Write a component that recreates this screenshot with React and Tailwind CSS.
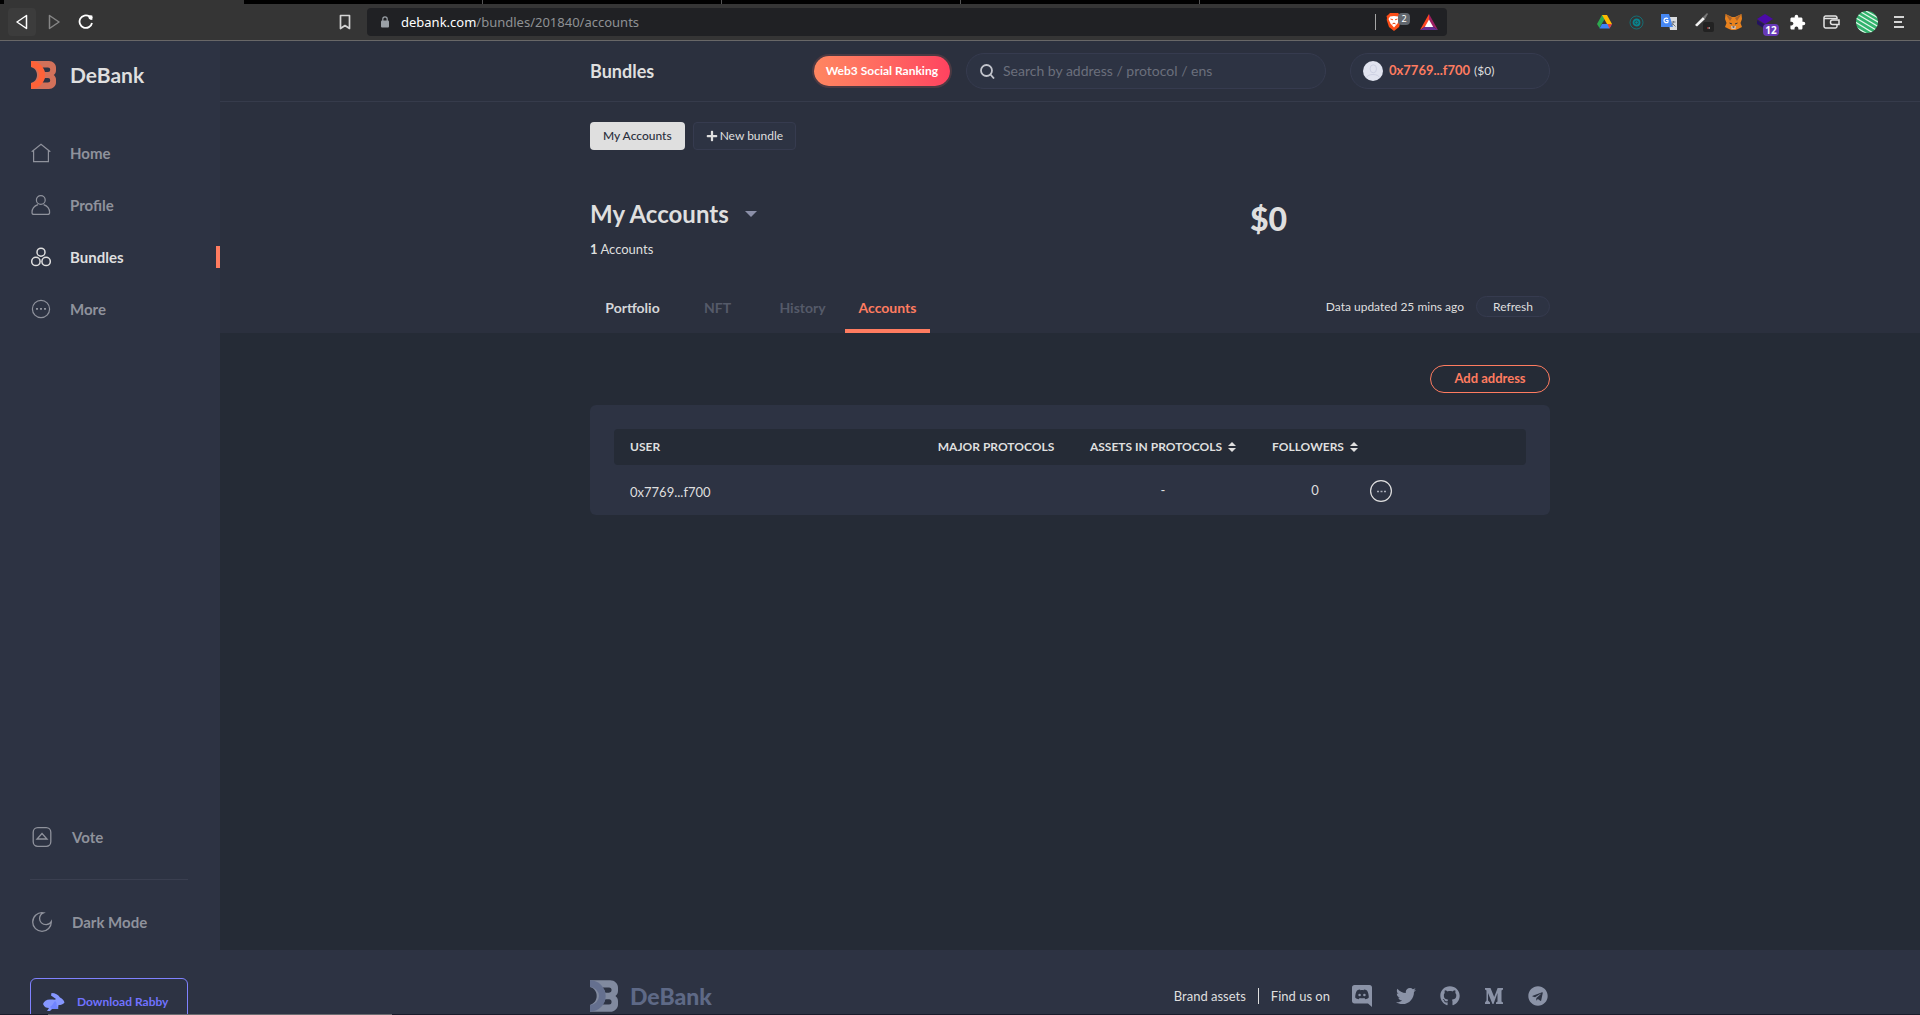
import React from "react";
import clsx from "clsx";
import { FaGithub, FaPlus, FaTelegram, FaTwitter } from "react-icons/fa";
import { MdExtension } from "react-icons/md";

const navItems = [
  { name: "Home", icon: HomeIcon },
  { name: "Profile", icon: ProfileIcon },
  { name: "Bundles", icon: BundlesIcon, active: true },
  { name: "More", icon: MoreIcon },
];

const tabs = [
  { name: "Portfolio", color: "text-[#d5d6d9]" },
  { name: "NFT", color: "text-[#555a69]" },
  { name: "History", color: "text-[#555a69]" },
  { name: "Accounts", color: "text-[#ff7c60]", active: true },
];

function HomeIcon() {
  return (
    <svg className="size-5" viewBox="0 0 20 20" fill="none" stroke="currentColor" strokeWidth="1.2">
      <path d="M0.7 8.8 10 1.2l9.3 7.6M2.6 7.6v11h14.8v-11" />
    </svg>
  );
}

function ProfileIcon() {
  return (
    <svg className="size-5" viewBox="0 0 20 20" fill="none" stroke="currentColor" strokeWidth="1.2">
      <circle cx="9.8" cy="5" r="4.4" />
      <path d="M7 9.6C3.500 10.800 1 14 1 17.400c0 1.300.8 2 2 2h13.600c1.200 0 2-.7 2-2 0-3.400-2.500-6.600-6-7.800" />
    </svg>
  );
}

function BundlesIcon() {
  return (
    <svg className="size-5" viewBox="0 0 20 20" fill="none" stroke="currentColor" strokeWidth="1.5">
      <circle cx="10" cy="5.200" r="4" />
      <circle cx="4.900" cy="14.400" r="4.200" />
      <circle cx="15.100" cy="14.400" r="4.200" />
    </svg>
  );
}

function MoreIcon() {
  return (
    <svg className="size-5" viewBox="0 0 20 20" fill="none" stroke="currentColor" strokeWidth="1.2">
      <circle cx="10" cy="10" r="8.600" />
      <path d="M5 9.800h2M9 9.800h2M13 9.800h2" strokeWidth="1.800" />
    </svg>
  );
}

function VoteIcon() {
  return (
    <svg className="size-5" viewBox="0 0 20 20" fill="none" stroke="currentColor" strokeWidth="1.300">
      <rect x="1.200" y="0.700" width="17.600" height="18.600" rx="4.500" />
      <path d="M10 6.500 15 12H5z" />
    </svg>
  );
}

function MoonIcon() {
  return (
    <svg className="size-5" viewBox="0 0 20 20" fill="none" stroke="currentColor" strokeWidth="1.300">
      <path d="M11.500.8C5.500-.2.700 4.600.700 10c0 5.300 4.200 9.300 9.300 9.300s9.600-4.200 9.300-9.800c-1.300 2.300-3 3.200-5.100 3.200-4 0-6.600-2.800-6.600-6.200 0-2.600 1.500-4.700 3.900-5.700z" />
    </svg>
  );
}

function RabbitIcon() {
  return (
    <svg className="h-[18px] w-[22px]" viewBox="0 0 22 18">
      <path d="M0 11c1-3 4-5 8-4.500 3 0 4 .5 5-.5L8 2.500 8.500 0c4 0 6.500 1.500 8.500 4.500 2.500 1 4 3 4.500 5C20 11.500 18 12 15.500 12L15 16H9l-2 2H4l2-3c-3 0-4.500-1-6-4z" fill="#8697ff" />
      <path d="M7 14c2-1 3-3 5-6 1.500 1 2 3 1.500 4.500L15.500 16H9z" fill="#7084ff" />
    </svg>
  );
}

function DebankLogo({ className, front, back }) {
  return (
    <svg className={className} viewBox="0 0 25 28">
      <path
        fill={back}
        fillRule="evenodd"
        d="M0 0h18c4 0 7 3 7 6.500v3c0 2-1 3.500-2.300 4.500 1.300 1 2.300 2.500 2.300 4.500v3c0 3.500-3 6.500-7 6.500H0v-6c8-2 8-14 0-16zM11 6.500c1.500 1.500 2.300 3 2.700 4.500h3.300a2.250 2.250 0 0 0 0-4.500zM13.700 17c-.4 1.500-1.200 3-2.700 4.500h6a2.250 2.250 0 0 0 0-4.500z"
      />
      <path fill={front} d="M0 0a14 14 0 0 1 0 28v-6a8 8 0 0 0 0-16z" />
    </svg>
  );
}

function DiscordIcon() {
  return (
    <svg className="h-[22px] w-5" viewBox="0 0 20 22" fill="currentColor">
      <path
        fillRule="evenodd"
        d="M2.500 0h15C19 0 20 1 20 2.500V22l-4-3.500H2.500C1 18.500 0 17.500 0 16V2.500C0 1 1 0 2.500 0zM5 5.500C3.800 7.500 3.200 10 3.200 12.500c1 1.300 2.200 1.700 3.600 1.700l.8-1.200c1.500.4 3.300.4 4.800 0l.8 1.200c1.400 0 2.600-.4 3.600-1.700 0-2.500-.6-5-1.800-7-1-.7-2-1-3-1l-.4.7c-1-.2-2.200-.2-3.200 0L8 4.500c-1 0-2 .3-3 1z"
      />
      <circle cx="7.600" cy="10" r="1.300" />
      <circle cx="12.400" cy="10" r="1.300" />
    </svg>
  );
}

function SortIcon() {
  return (
    <svg className="h-2.5 w-2" viewBox="0 0 8 10" fill="currentColor">
      <path d="M4 0l4 4H0zM4 10l4-4H0z" />
    </svg>
  );
}

function BrowserBar() {
  return (
    <div className="text-[#e0e0e0]">
      <div className="flex h-1 bg-black pl-1">
        <div className="w-60 bg-[#353535]" />
        <div className="w-[239px] border-r border-[#555]" />
        <div className="w-[239px] border-r border-[#555]" />
        <div className="w-[239px] border-r border-[#555]" />
        <div className="w-[239px] border-r border-[#555]" />
      </div>
      <div className="flex h-[37px] items-center border-b border-[#686767] bg-[#353535]">
        <div className="flex w-[367px] items-center pl-2">
          <button aria-label="Back" className="flex size-7 items-center justify-center rounded bg-[#3c3c3c]">
            <svg className="h-4 w-3" viewBox="0 0 12 16" fill="none" stroke="#fff" strokeWidth="1.500" strokeLinejoin="round">
              <path d="M10.500 1.500v13L1 8z" />
            </svg>
          </button>
          <button aria-label="Forward" className="ml-1 flex size-7 items-center justify-center">
            <svg className="h-4 w-3" viewBox="0 0 12 16" fill="none" stroke="#868686" strokeWidth="1.500" strokeLinejoin="round">
              <path d="M1.500 1.500v13L11 8z" />
            </svg>
          </button>
          <button aria-label="Reload" className="ml-1 flex size-7 items-center justify-center">
            <svg className="size-4" viewBox="0 0 16 16" fill="none" stroke="#fff" strokeWidth="1.800">
              <path d="M11.500 2.500A6.300 6.300 0 1 0 14 9" />
              <path d="M9.800 1.500h4.500v4.500l-2-.500z" fill="#fff" stroke="none" />
              <circle cx="12.500" cy="3.500" r="2" fill="#fff" stroke="none" />
            </svg>
          </button>
          <button aria-label="Bookmark" className="mr-4 ml-auto">
            <svg className="h-4 w-3" viewBox="0 0 12 16" fill="none" stroke="#d5d5d5" strokeWidth="1.700">
              <path d="M1.500 1.500h9v13L6 11.500l-4.500 3z" strokeLinejoin="round" />
            </svg>
          </button>
        </div>
        <div className="flex h-7 flex-1 items-center rounded bg-[#202124] pr-2 pl-3.5">
          <svg className="h-3 w-2" viewBox="0 0 8 12">
            <path d="M1.800 5V3a2.200 2.200 0 0 1 4.400 0v2" fill="none" stroke="#9aa0a6" strokeWidth="1.200" />
            <rect y="4.500" width="8" height="7" rx="1" fill="#9aa0a6" />
          </svg>
          <div className="ml-3 flex-1 pt-px font-['Noto_Sans',sans-serif] text-[13px] text-[#8f9194]">
            <span className="text-white">debank.com</span>/bundles/201840/accounts
          </div>
          <div className="h-4 w-px bg-[#a5a5a5]" />
          <div className="relative ml-2.5">
            <svg className="h-[18px] w-4" viewBox="0 0 16 18">
              <path d="M4 0h8l2 2 1.500 1-.5 2 .3 2L13 14l-5 4-5-4L.700 7 1 5 .500 3 2 2z" fill="#fb4d17" />
              <path d="M4 3.500 8 3l4 .5 1.500 2.500-2 4.500L8 14.500 4.500 10.500l-2-4.500z" fill="#fff" />
              <path d="M4.500 6l2.500.800M11.500 6 9 6.800M6.500 11l1.500-1 1.500 1" stroke="#fb4d17" />
            </svg>
            <span className="absolute top-0 left-3 flex h-3 w-3 items-center justify-center rounded bg-[#61676e] font-['Noto_Sans',sans-serif] text-[9px] text-white">
              2
            </span>
          </div>
          <svg className="mr-px ml-[18px] h-4 w-[18px]" viewBox="0 0 18 16">
            <path d="M9 0 0 16l9-6z" fill="#ff4724" />
            <path d="M9 0l9 16-9-6z" fill="#9e1f63" />
            <path d="M0 16h18l-9-6z" fill="#662d91" />
            <path d="M9 5.500 4.800 13h8.400z" fill="#fff" />
          </svg>
        </div>
        <div className="flex w-[473px] items-center justify-end pr-4">
          <svg className="mr-[17px] h-3.5 w-[15px]" viewBox="0 0 15 14">
            <path d="M5 0h5L5 8.500 2.500 13 0 9z" fill="#2da94f" />
            <path d="M5 0h5l5 9h-5z" fill="#ffba00" />
            <path d="M5 9h10l-2.500 4.500h-10z" fill="#3d83f6" />
            <path d="M10.500 9H15l-2.500 4.500z" fill="#ea4335" />
          </svg>
          <svg className="mr-[17px] size-[15px]" viewBox="0 0 15 15" fill="none" stroke="#08858f">
            <circle cx="7.500" cy="7.500" r="6.500" strokeOpacity=".7" />
            <circle cx="7.500" cy="7.500" r="3" strokeWidth="1.800" />
            <circle cx="7.500" cy="7.500" r="1" fill="#08858f" />
          </svg>
          <svg className="mr-4 h-4 w-[17px]" viewBox="0 0 17 16">
            <path d="M7 3h9v13H9z" fill="#d9dbde" />
            <path d="M0 0h8l4 13H0z" fill="#4688f4" />
            <path d="M10.500 8h4M12.500 7v1l-2 4M11.500 9.500l3 3" stroke="#70777f" fill="none" />
            <path d="M7 4.800A2.300 2.300 0 1 0 7 8V6.500H5" stroke="#fff" strokeWidth="1.200" fill="none" />
          </svg>
          <svg className="mr-[11px] h-5 w-5" viewBox="0 0 20 20">
            <path d="M1 13 9 5l2 2-8 7.500z" fill="#f2f2f2" />
            <path d="m9 5 4-4 1 1-3 5z" fill="#777" />
            <rect x="9" y="10" width="11" height="10" rx="2" fill="#222" />
            <path d="M13 16h1.500" stroke="#e33" />
            <path d="M14.500 16H16" stroke="#eee" />
          </svg>
          <svg className="mr-[15px] h-4 w-[17px]" viewBox="0 0 17 16">
            <path d="M.500 0 7 3h3l6.500-3L17 5l-1.500 4L17 13l-4 2-2.500 1h-4L4 15l-4-2 1.500-4L0 5z" fill="#e8821e" />
            <path d="M.500 0 7 4 5 7zM16.500 0 10 4l2 3z" fill="#a8632b" />
            <path d="M6 12h5l-.5 3h-4z" fill="#d5bfb2" />
            <path d="M4.500 9 7 10M12.500 9 10 10" stroke="#233447" />
            <path d="M7.500 12.500h2l-.3 1h-1.400z" fill="#161616" />
          </svg>
          <div className="relative mr-4">
            <svg className="h-4 w-4" viewBox="0 0 16 16">
              <path d="M8 0l8 5-8 5-8-5z" fill="#4b0aa8" />
              <path d="M0 6v4l8 5V11z" fill="#23125f" />
            </svg>
            <span className="absolute top-2.5 left-1.5 flex h-3 w-4 items-center justify-center rounded-sm bg-[#673ab7] font-['Open_Sans',sans-serif] text-[10px] font-bold text-white">
              12
            </span>
          </div>
          <MdExtension className="mr-[17px] size-[17px] text-white" />
          <svg className="mr-4 h-3.5 w-[17px]" viewBox="0 0 17 14" fill="none" stroke="#e3e3e3" strokeWidth="1.500">
            <path d="M14 4V2.500A1.700 1.700 0 0 0 12.500 1h-10A1.700 1.700 0 0 0 1 2.500v9A1.700 1.700 0 0 0 2.500 13h10a1.700 1.700 0 0 0 1.500-1.500V10M1 3.500h13" />
            <path d="M9.500 5H16v4.500H9.500a2 2 0 0 1-2-2V7a2 2 0 0 1 2-2z" fill="#353535" />
          </svg>
          <svg className="mr-4 size-[22px]" viewBox="0 0 22 22">
            <clipPath id="globe">
              <circle cx="11" cy="11" r="11" />
            </clipPath>
            <g clipPath="url(#globe)">
              <path d="M0 0h22v22H0z" fill="#32b36d" />
              <path d="M10 0l14 8M5 1l18 10.500M1 3l21 12.500M0 7l21 12.500M-1 11l19 11.500M-1 16l14 8" stroke="#e2f6ea" strokeWidth="1.300" />
            </g>
          </svg>
          <button aria-label="Menu" className="flex w-2.5 flex-col gap-[3px]">
            <span className="h-0.5 w-2.5 bg-[#d5d5d5]" />
            <span className="h-0.5 w-2 bg-[#d5d5d5]" />
            <span className="h-0.5 w-2.5 bg-[#d5d5d5]" />
          </button>
        </div>
      </div>
    </div>
  );
}

function Sidebar() {
  return (
    <aside className="flex w-[220px] shrink-0 flex-col bg-[#2d3343] pt-5 text-[15px] font-bold text-[#8f929c]">
      <a href="#" className="flex h-7 items-center gap-3.5 pl-[31px] text-[21px] leading-6 text-[#dfdfdf]">
        <DebankLogo className="h-7 w-[25px]" front="#ff6238" back="#d2715a" />
        DeBank
      </a>
      <nav className="mt-[38px] flex flex-col">
        {navItems.map(({ name, icon: Icon, active }) => (
          <a
            key={name}
            href="#"
            className={clsx("flex h-[52px] items-center justify-between pl-[31px]", active && "text-[#dfdfdf]")}
          >
            <span className="flex items-center gap-[19px]">
              <Icon />
              {name}
            </span>
            {active && <span className="h-[22px] w-1 bg-[#ff7c60]" />}
          </a>
        ))}
      </nav>
      <div className="mt-auto px-[30px] pr-8">
        <a href="#" className="flex items-center gap-5 pb-[30px] pl-0.5 leading-6">
          <VoteIcon />
          Vote
        </a>
        <button className="flex w-full items-center gap-5 border-t border-[#3a3f50] pt-[30px] pb-11 pl-0.5 leading-6">
          <MoonIcon />
          Dark Mode
        </button>
        <div className="h-9 overflow-hidden">
          <a
            href="#"
            className="flex h-12 items-center gap-3 rounded-md border border-[#8082ff] pl-3 text-xs text-[#7172ff]"
          >
            <RabbitIcon />
            Download Rabby
          </a>
        </div>
      </div>
    </aside>
  );
}

function Header() {
  return (
    <header className="border-b border-[#363b4b]">
      <div className="mx-auto flex h-[60px] max-w-[960px] items-center">
        <h1 className="text-lg font-bold">Bundles</h1>
        <button className="ml-auto h-[30px] rounded-full bg-linear-to-r from-[#ff8660] to-[#ff4260] px-3 text-xs font-bold text-white ring-2 ring-[#4c3a43]">
          Web3 Social Ranking
        </button>
        <label className="ml-4 flex h-9 w-[360px] items-center gap-2 rounded-full border border-[#363b4f] bg-[#2d3343] px-[13px]">
          <svg className="size-[15px]" viewBox="0 0 15 15" fill="none" stroke="#c2c4cc" strokeWidth="1.800">
            <circle cx="6.500" cy="6.500" r="5.500" />
            <path d="m10.500 10.500 3.500 4" />
          </svg>
          <input
            aria-label="Search"
            placeholder="Search by address / protocol / ens"
            className="flex-1 text-sm outline-none placeholder:text-[#6b6f7c]"
          />
        </label>
        <a
          href="#"
          className="ml-6 flex h-9 w-[200px] items-center rounded-full border border-[#363b4f] bg-[#2d3343] pl-3"
        >
          <svg className="size-5" viewBox="0 0 20 20">
            <circle cx="10" cy="10" r="10" fill="#e1e4f0" />
            <g fill="none" stroke="#cdd1e3">
              <ellipse cx="10.300" cy="7.800" rx="3.200" ry="4" />
              <path d="M3.500 16.500c1-2 3-3 6.500-3s5.500 1 6.500 3" />
            </g>
          </svg>
          <span className="ml-1.5 text-[13px] font-bold text-[#ff7c60]">0x7769...f700</span>
          <span className="ml-1 text-xs">($0)</span>
        </a>
      </div>
    </header>
  );
}

function Hero() {
  return (
    <section className="mx-auto w-full max-w-[960px] pt-5">
      <div className="flex gap-2">
        <button className="h-7 rounded bg-[#dfdfdf] px-[13px] text-xs font-medium text-[#2b303e]">My Accounts</button>
        <button className="flex h-7 items-center gap-0.5 rounded border border-[#363b4f] bg-[#2d3343] px-3 text-xs">
          <FaPlus className="size-3" />
          New bundle
        </button>
      </div>
      <div className="mt-12 grid grid-cols-[660px_1fr]">
        <div>
          <button className="flex items-center gap-4 text-2xl leading-8 font-bold">
            My Accounts
            <svg className="h-1.5 w-3" viewBox="0 0 12 6">
              <path d="M0 0h12L6 6z" fill="#8b8fa8" />
            </svg>
          </button>
          <p className="mt-[9px] text-[13px] leading-5">
            <b>1</b> Accounts
          </p>
        </div>
        <div className="text-[32px] leading-[42px] font-black">$0</div>
      </div>
      <div className="mt-[26px] flex h-12 items-start">
        {tabs.map((tab) => (
          <button
            key={tab.name}
            className={clsx(
              "h-12 w-[85px] border-b-4 pt-0.5 text-sm font-bold",
              tab.color,
              tab.active ? "border-[#ff7c60]" : "border-transparent"
            )}
          >
            {tab.name}
          </button>
        ))}
        <div className="mt-[11px] ml-auto flex items-center gap-3 text-xs">
          Data updated 25 mins ago
          <button className="h-[21px] rounded-full border border-[#363b4f] bg-[#2d3343] px-4">Refresh</button>
        </div>
      </div>
    </section>
  );
}

function AccountsTable() {
  return (
    <div className="mt-3 rounded-md bg-[#2d3343] px-6 pt-6">
      <table className="w-full table-fixed">
        <thead className="bg-[#252b36] text-xs">
          <tr className="h-9">
            <th className="w-[320px] rounded-l-sm pl-4 text-left">USER</th>
            <th className="w-[124px]">MAJOR PROTOCOLS</th>
            <th className="w-[210px]">
              <button className="inline-flex items-center gap-1.5">
                ASSETS IN PROTOCOLS <SortIcon />
              </button>
            </th>
            <th className="w-[94px]">
              <button className="inline-flex items-center gap-1.5">
                FOLLOWERS <SortIcon />
              </button>
            </th>
            <th className="rounded-r-sm" />
          </tr>
        </thead>
        <tbody className="text-center text-[13px]">
          <tr className="h-[50px]">
            <td className="pt-1.5 pl-4 text-left">0x7769...f700</td>
            <td />
            <td className="pt-0.5">-</td>
            <td className="pt-0.5">0</td>
            <td className="pt-0.5 pl-2">
              <button aria-label="More actions" className="block">
                <svg className="size-[22px]" viewBox="0 0 22 22" fill="none" stroke="#dfdfdf">
                  <circle cx="11" cy="11" r="10.400" strokeWidth="1.200" />
                  <path d="M7 11.500h2M10.500 11.500h2M14 11.500h2" stroke="#a9acb8" strokeWidth="1.500" />
                </svg>
              </button>
            </td>
          </tr>
        </tbody>
      </table>
    </div>
  );
}

function Footer() {
  return (
    <footer className="h-16 bg-[#2d3343]">
      <div className="mx-auto flex max-w-[960px] items-center pt-[30px] text-[13px] leading-8">
        <div className="flex items-center gap-3 text-[23px] font-black text-[#5e6986]">
          <DebankLogo className="h-8 w-7" front="#65708f" back="#818a9f" />
          DeBank
        </div>
        <a href="#" className="ml-auto">
          Brand assets
        </a>
        <div className="mx-3 h-4 w-px bg-[#dfdfdf]" />
        Find us on
        <div className="ml-[22px] flex items-center gap-6 pr-0.5 text-[#8b93a7]">
          <a href="#" aria-label="Discord">
            <DiscordIcon />
          </a>
          <a href="#" aria-label="Twitter">
            <FaTwitter className="size-5" />
          </a>
          <a href="#" aria-label="GitHub">
            <FaGithub className="size-5" />
          </a>
          <a href="#" aria-label="Medium">
            <svg className="size-5" viewBox="0 0 20 20" fill="currentColor">
              <path d="M1 2h5.500L10.200 11 13.600 2H19v1.500l-1.500 1v11l1.500 1V18h-7v-1.500l1.500-1V7L9.500 18h-1L4 7v7.500l2 2V18H1v-1.500l1.500-2v-10L1 3.500z" />
            </svg>
          </a>
          <a href="#" aria-label="Telegram">
            <FaTelegram className="size-5" />
          </a>
        </div>
      </div>
    </footer>
  );
}

export default function App() {
  return (
    <div className="flex min-h-screen flex-col bg-[#2b303e] font-['Lato',sans-serif] text-[#dfdfdf]">
      <BrowserBar />
      <div className="flex flex-1">
        <Sidebar />
        <div className="flex flex-1 flex-col">
          <Header />
          <Hero />
          <main className="flex-1 bg-[#252b36] pt-8">
            <div className="mx-auto max-w-[960px]">
              <div className="flex justify-end">
                <button className="h-7 w-[120px] rounded-full border border-[#ff7c60] text-[13px] font-bold text-[#ff7c60]">
                  Add address
                </button>
              </div>
              <AccountsTable />
            </div>
          </main>
          <Footer />
        </div>
      </div>
      <div className="h-px bg-[#1a1c2b] pl-12">
        <div className="h-px w-[344px] bg-[#6b6b70]" />
      </div>
    </div>
  );
}
